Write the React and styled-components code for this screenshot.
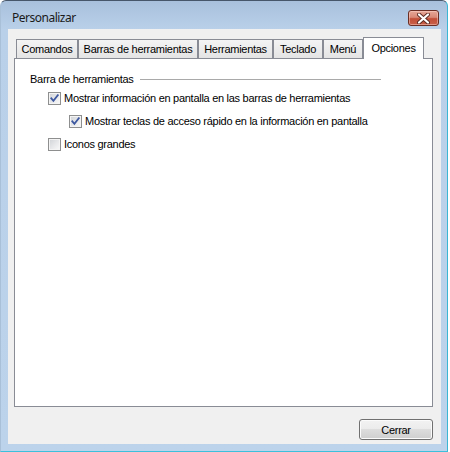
import React from "react";
import styled, { createGlobalStyle } from "styled-components";

const Global = createGlobalStyle`
  html, body { margin: 0; padding: 0; background: #ffffff; }
  body { width: 450px; height: 452px; overflow: hidden; font-family: "Liberation Sans", Arial, sans-serif; font-size: 11px; letter-spacing: -0.28px; color: #000; }
  * { box-sizing: border-box; }
`;

const Window = styled.div`
  width: 448px;
  height: 452px;
  display: flex;
  flex-direction: column;
  border: 1px solid;
  border-color: #46566a #3ab6d4 #3cc0dc #a9c0d8;
  border-radius: 6px 6px 0 0;
  background: linear-gradient(#a8c0dc 0px, #b9d0e9 28px, #bcd3eb 100%);
  padding: 0 6px 7px 7px;
`;

const TitleBar = styled.div`
  height: 28px;
  display: flex;
  align-items: flex-start;
  justify-content: space-between;
  padding: 0 2px 0 4px;
`;

const Title = styled.span`
  margin-top: 9px;
  font-family: "Noto Sans", "Open Sans", sans-serif;
  font-size: 12px;
  letter-spacing: -0.5px;
  line-height: 16px;
  color: #1a1a1a;
`;

const CloseButton = styled.div`
  margin-top: 9px;
  width: 31px;
  height: 16px;
  border: 1px solid #6a2e24;
  border-radius: 3px;
  background: linear-gradient(#e6a797 0%, #d98a78 45%, #c24f38 55%, #c8604a 100%);
  box-shadow: inset 0 0 0 1px rgba(255, 220, 210, 0.45);
  display: flex;
  align-items: center;
  justify-content: center;
`;

const Client = styled.div`
  flex: 1;
  background: #f0f0f0;
  display: flex;
  flex-direction: column;
  padding: 8px 8px 4px 6px;
`;

const TabRow = styled.div`
  height: 22px;
  display: flex;
  align-items: flex-end;
  padding-left: 2px;
  margin-bottom: -1px;
  position: relative;
  z-index: 1;
`;

const Tab = styled.div`
  width: ${(p) => p.$w}px;
  height: ${(p) => (p.$active ? 22 : 19)}px;
  margin-bottom: ${(p) => (p.$active ? 0 : 1)}px;
  padding-bottom: ${(p) => (p.$active ? 2 : 0)}px;
  border: 1px solid #898c95;
  border-bottom: none;
  background: ${(p) => (p.$active ? "#ffffff" : "linear-gradient(#f4f4f4, #e4e4e4)")};
  display: flex;
  align-items: center;
  justify-content: center;
  white-space: nowrap;
  font-size: 11px;
`;

const Panel = styled.div`
  flex: 1;
  background: #ffffff;
  border: 1px solid #898c95;
  display: flex;
  flex-direction: column;
  padding: 14px 51px 0 15px;
`;

const GroupHeader = styled.div`
  height: 13px;
  display: flex;
  align-items: center;
  gap: 6px;
`;

const GroupLabel = styled.span`
  white-space: nowrap;
  line-height: 13px;
`;

const GroupLine = styled.div`
  flex: 1;
  height: 1px;
  background: #a9a9a9;
`;

const CheckList = styled.div`
  display: flex;
  flex-direction: column;
  gap: 10px;
  margin-top: 6px;
  padding-left: 18px;
`;

const CheckRow = styled.label`
  display: flex;
  align-items: center;
  gap: 3px;
  height: 13px;
  margin-left: ${(p) => p.$indent || 0}px;
  white-space: nowrap;
`;

const Box = styled.span`
  width: 13px;
  height: 13px;
  flex: none;
  border: 1px solid #8e8f8f;
  background: linear-gradient(135deg, #cfd2d6 0%, #e6e7e9 50%, #fafafa 100%);
  box-shadow: inset 0 0 0 1px #f4f4f4;
  display: flex;
  align-items: center;
  justify-content: center;
`;

const RowText = styled.span`
  line-height: 13px;
`;

const Footer = styled.div`
  display: flex;
  justify-content: flex-end;
  margin-top: 12px;
`;

const Button = styled.div`
  width: 74px;
  height: 21px;
  border: 1px solid #707070;
  border-radius: 3px;
  background: linear-gradient(#f2f2f2 0%, #ebebeb 50%, #dddddd 50%, #cfcfcf 100%);
  box-shadow: inset 0 0 0 1px #fbfbfb;
  display: flex;
  align-items: center;
  justify-content: center;
  font-size: 11px;
`;

const Check = () => (
  <svg width="11" height="11" viewBox="0 0 11 11">
    <path d="M2.3 5.3 L4.4 7.8 L8.8 2.2" fill="none" stroke="#3d58a0" strokeWidth="1.8" strokeLinecap="square" strokeLinejoin="miter" />
  </svg>
);

const CheckBox = ({ checked, indent, children }) => (
  <CheckRow $indent={indent}>
    <Box>{checked && <Check />}</Box>
    <RowText>{children}</RowText>
  </CheckRow>
);

const tabs = [
  { label: "Comandos", w: 62 },
  { label: "Barras de herramientas", w: 120 },
  { label: "Herramientas", w: 75 },
  { label: "Teclado", w: 50 },
  { label: "Menú", w: 40 },
  { label: "Opciones", w: 61, active: true },
];

export default function App() {
  return (
    <>
      <Global />
      <Window>
        <TitleBar>
          <Title>Personalizar</Title>
          <CloseButton>
            <svg width="13" height="11" viewBox="0 0 13 11">
              <path d="M2 1.5 L11 9.5 M11 1.5 L2 9.5" stroke="#5a2a22" strokeWidth="4" strokeLinecap="round" />
              <path d="M2 1.5 L11 9.5 M11 1.5 L2 9.5" stroke="#ffffff" strokeWidth="2.2" strokeLinecap="round" />
            </svg>
          </CloseButton>
        </TitleBar>
        <Client>
          <TabRow>
            {tabs.map((t) => (
              <Tab key={t.label} $w={t.w} $active={t.active}>
                {t.label}
              </Tab>
            ))}
          </TabRow>
          <Panel>
            <GroupHeader>
              <GroupLabel>Barra de herramientas</GroupLabel>
              <GroupLine />
            </GroupHeader>
            <CheckList>
              <CheckBox checked>Mostrar información en pantalla en las barras de herramientas</CheckBox>
              <CheckBox checked indent={21}>Mostrar teclas de acceso rápido en la información en pantalla</CheckBox>
              <CheckBox>Iconos grandes</CheckBox>
            </CheckList>
          </Panel>
          <Footer>
            <Button>Cerrar</Button>
          </Footer>
        </Client>
      </Window>
    </>
  );
}
